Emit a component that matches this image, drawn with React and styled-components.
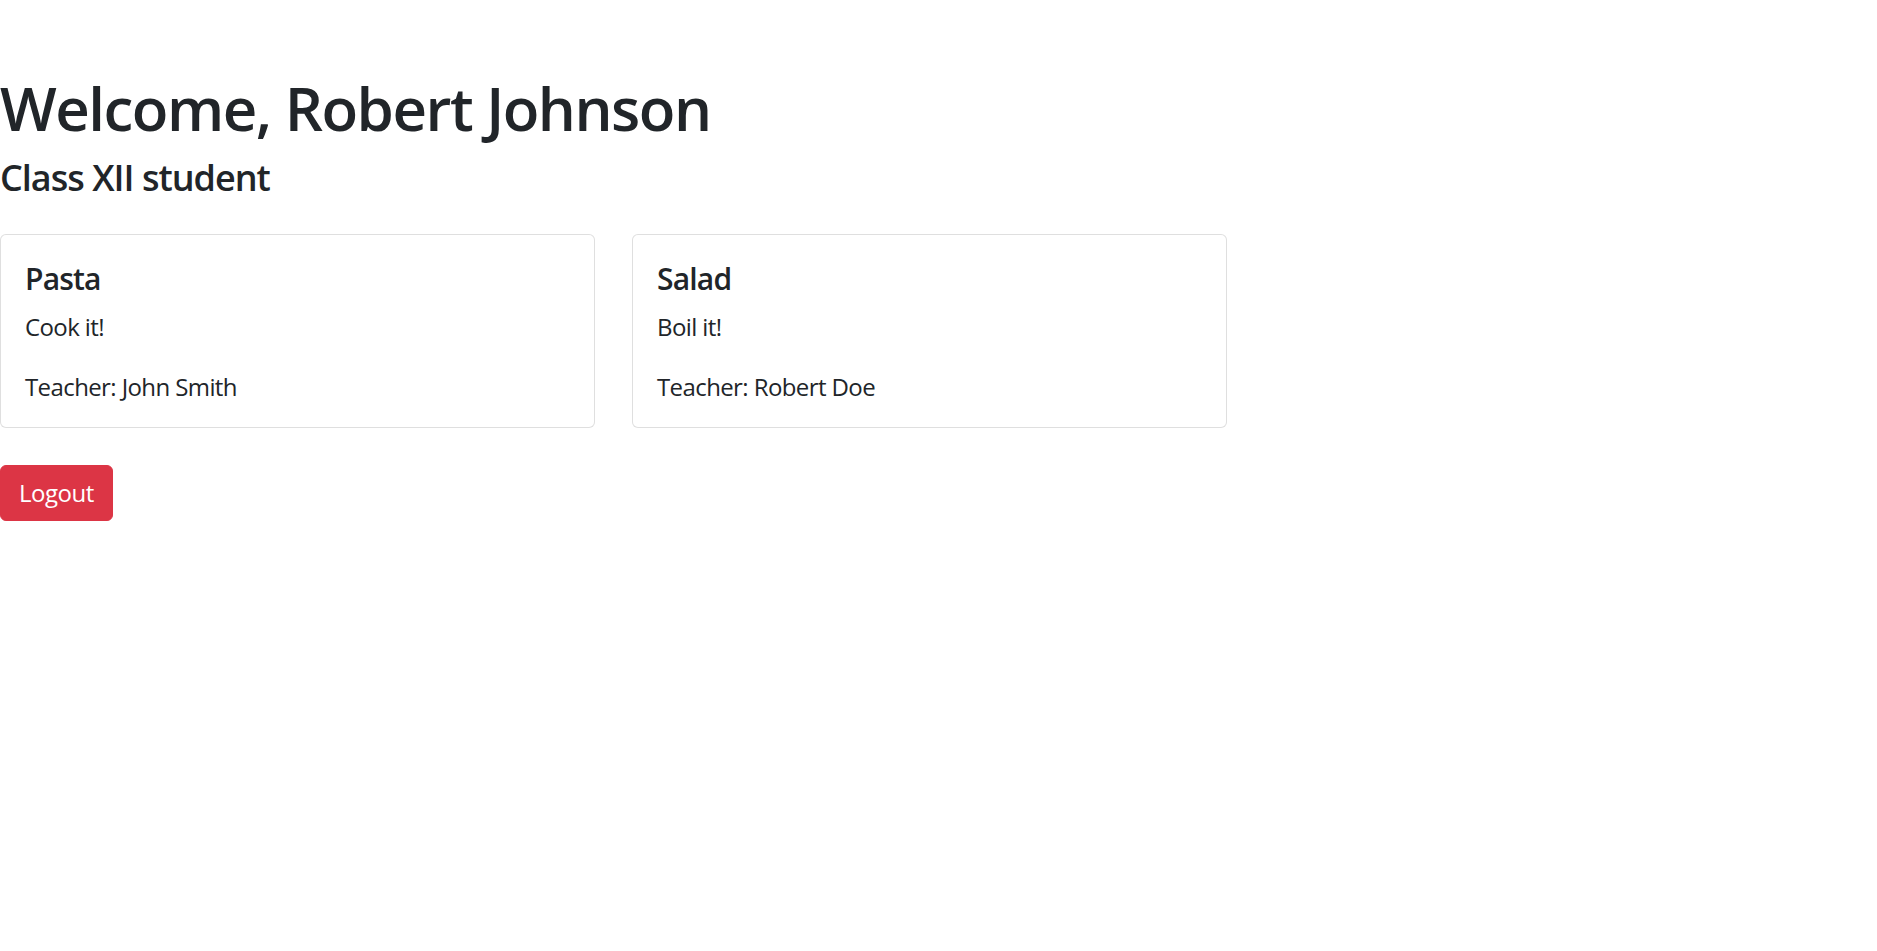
import styled, { createGlobalStyle } from 'styled-components';

const GlobalStyle = createGlobalStyle`
  html, body {
    margin: 0;
    padding: 0;
    background: #fff;
  }
  body {
    font-family: 'Open Sans', 'Noto Sans', sans-serif;
    font-size: 24px;
    line-height: 1.5;
    color: #212529;
  }
  * {
    box-sizing: border-box;
  }
`;

const courses = [
  { id: 1, name: 'Pasta', description: 'Cook it!', teacher: 'John Smith' },
  { id: 2, name: 'Salad', description: 'Boil it!', teacher: 'Robert Doe' },
];

export default function App() {
  return (
    <>
      <GlobalStyle />
      <Page>
        <Title>Welcome, Robert Johnson</Title>
        <Subtitle>Class XII student</Subtitle>
        <CourseGrid>
          {courses.map((course) => (
            <Card key={course.id}>
              <CardTitle>{course.name}</CardTitle>
              <CardText>{course.description}</CardText>
              <CardText>Teacher: {course.teacher}</CardText>
            </Card>
          ))}
        </CourseGrid>
        <LogoutButton type="button">Logout</LogoutButton>
      </Page>
    </>
  );
}

// ---------------- 페이지 ------------------------
const Page = styled.div`
  padding-top: 72px;
`;

const Title = styled.h1`
  margin: 0 0 12px;
  font-size: 60px;
  font-weight: 600;
  line-height: 1.2;
  letter-spacing: -1.5px;
`;

const Subtitle = styled.h4`
  margin: 0 0 35px;
  font-size: 36px;
  font-weight: 600;
  line-height: 1.2;
  letter-spacing: -1px;
`;

// ---------------- 카드 ------------------------
const CourseGrid = styled.div`
  display: grid;
  grid-template-columns: repeat(3, 595px);
  column-gap: 37px;
  margin-bottom: 37px;
`;

const Card = styled.div`
  display: flex;
  flex-direction: column;
  padding: 26px 24px 22px;
  border: 1.5px solid rgba(0, 0, 0, 0.125);
  border-radius: 6px;
  background: #fff;
`;

const CardTitle = styled.h5`
  margin: 0 0 12px;
  font-size: 30px;
  font-weight: 600;
  line-height: 1.2;
  letter-spacing: -0.8px;
`;

const CardText = styled.p`
  margin: 0 0 24px;
  letter-spacing: -0.6px;

  &:last-child {
    margin-bottom: 0;
  }
`;

const LogoutButton = styled.button`
  display: inline-block;
  padding: 9px 18px;
  border: 1.5px solid #dc3545;
  border-radius: 6px;
  background: #dc3545;
  color: #fff;
  font-family: inherit;
  font-size: 24px;
  line-height: 1.5;
  letter-spacing: -0.5px;
  cursor: pointer;
`;
